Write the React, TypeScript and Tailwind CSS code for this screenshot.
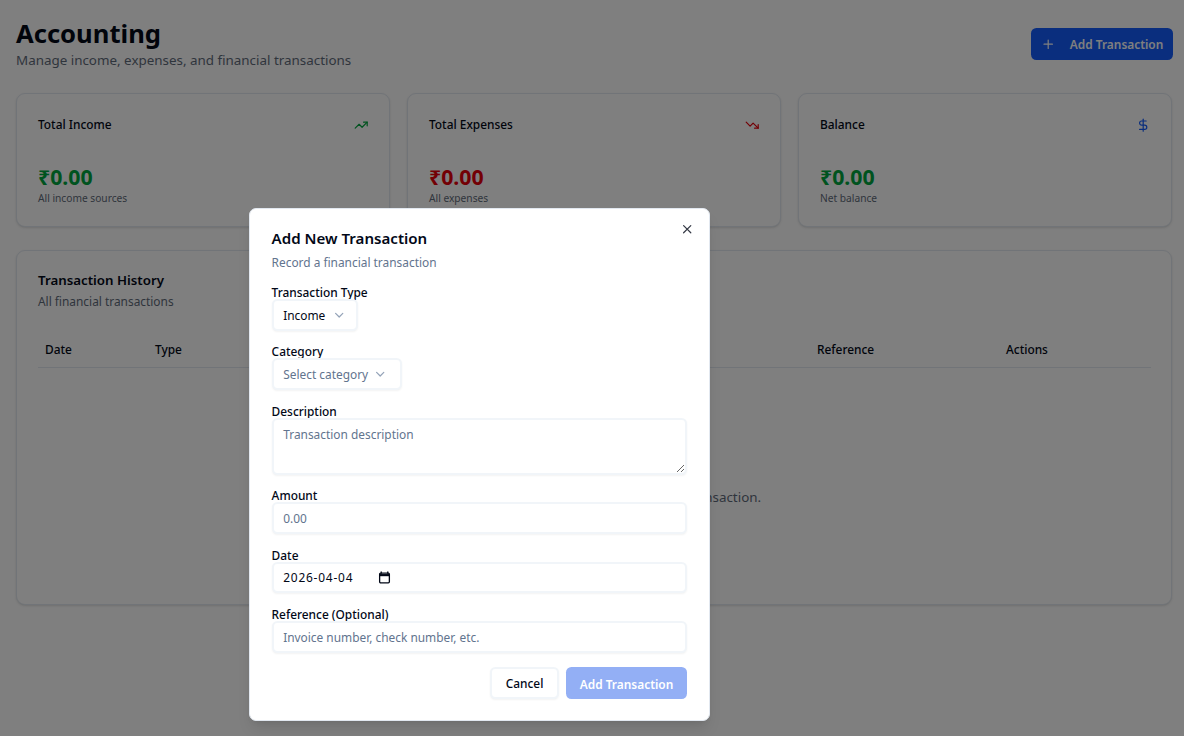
import { ChevronDown, DollarSign, Plus, TrendingDown, TrendingUp, X } from "lucide-react";

const stats = [
  { title: "Total Income", value: "₹0.00", note: "All income sources", color: "text-[#00a63e]", icon: <TrendingUp className="w-[14.4px] h-[14.4px] text-[#00a63e]" /> },
  { title: "Total Expenses", value: "₹0.00", note: "All expenses", color: "text-[#e7000b]", icon: <TrendingDown className="w-[14.4px] h-[14.4px] text-[#e7000b]" /> },
  { title: "Balance", value: "₹0.00", note: "Net balance", color: "text-[#00a63e]", icon: <DollarSign className="w-[14.4px] h-[14.4px] text-[#155dfc]" /> },
];

const columns = [
  { name: "Date", width: "w-[110px]" },
  { name: "Type", width: "w-[150px]" },
  { name: "Category", width: "w-[160px]" },
  { name: "Description", width: "w-[180px]" },
  { name: "Amount", width: "w-[172px]" },
  { name: "Reference", width: "w-[189px]" },
  { name: "Actions", width: "flex-1" },
];

const inputClass =
  "w-full h-[32.4px] rounded-[5.4px] border-2 border-[#f1f5f9] bg-white px-[9.6px] text-[11.9px] shadow-xs outline-none flex items-center placeholder:text-[#62748e]";

function Field({ label, children }: { label: string; children: React.ReactNode }) {
  return (
    <div className="mt-[13.8px] flex flex-col">
      <div className="text-[11.9px] font-medium leading-[13px] text-[#020817]">{label}</div>
      {children}
    </div>
  );
}

export default function App() {
  return (
    <div className="relative h-[736px] overflow-hidden bg-white font-['Noto_Sans',sans-serif] text-[#020817]">
      <div className="pl-[16px] pr-[12px] pt-[18px]">
        <div className="flex items-start justify-between">
          <div>
            <h1 className="text-[25.6px] leading-[32px] font-bold">Accounting</h1>
            <p className="text-[13.4px] leading-[20px] text-[#5f6b7a]">Manage income, expenses, and financial transactions</p>
          </div>
          <button className="mr-[-1px] mt-[10px] flex h-[32.4px] w-[142px] items-center rounded-[5.4px] bg-[#155dfc] pl-[10px] text-[11.9px] font-semibold text-white">
            <Plus className="mr-[14.4px] h-[14.4px] w-[14.4px]" />
            <span className="pt-[1px]">Add Transaction</span>
          </button>
        </div>

        <div className="mt-[23px] grid grid-cols-3 gap-[17px]">
          {stats.map((s) => (
            <div key={s.title} className="h-[134px] rounded-[9px] border border-[#e2e8f0] bg-white pl-[21px] pr-[20.4px] pt-[22px] shadow-sm">
              <div className="flex h-[18px] items-center justify-between">
                <span className="text-[11.9px] font-medium">{s.title}</span>
                {s.icon}
              </div>
              <div className={`mt-[29px] text-[21.3px] leading-[28.8px] font-bold ${s.color}`}>{s.value}</div>
              <div className="mt-[-1px] text-[10.2px] leading-[14.4px] text-[#5f6b7a]">{s.note}</div>
            </div>
          ))}
        </div>

        <div className="mt-[23px] h-[355px] rounded-[9px] border border-[#e2e8f0] bg-white pl-[21px] pr-[19.6px] pt-[20px] shadow-sm">
          <h2 className="text-[13.3px] leading-[18px] font-semibold">Transaction History</h2>
          <p className="mt-[3px] text-[11.9px] leading-[18px] text-[#5f6b7a]">All financial transactions</p>
          <div className="mt-[22px] flex h-[36px] items-center border-b border-[#e2e8f0] px-[7px] text-[11.9px] font-medium">
            {columns.map((c) => (
              <div key={c.name} className={c.width}>{c.name}</div>
            ))}
          </div>
          <p className="mt-[119px] pl-[6px] text-center text-[13.4px] text-[#5f6b7a]">No transactions found. Create your first transaction.</p>
        </div>
      </div>

      <div className="absolute inset-0 bg-black/50" />

      <div className="absolute left-[249px] top-[208px] h-[513px] w-[461px] rounded-[7px] border border-[#e2e8f0] bg-white pl-[21.6px] pr-[22px] pt-[20.6px] shadow-lg">
        <X className="absolute right-[15px] top-[13px] h-[14.4px] w-[14.4px] text-[#020817] opacity-80" />
        <h2 className="text-[15.1px] leading-[16.2px] font-semibold">Add New Transaction</h2>
        <p className="mt-[7px] pb-[1px] text-[11.9px] leading-[18px] text-[#62748e]">Record a financial transaction</p>

        <Field label="Transaction Type">
          <div className={`${inputClass} !w-[86px] justify-between`}>
            <span className="pt-[2px]">Income</span>
            <ChevronDown className="h-[14.4px] w-[14.4px] text-[#94a3b8]" />
          </div>
        </Field>
        <Field label="Category">
          <div className={`${inputClass} !w-[130px] !pr-[12px] justify-between text-[#62748e]`}>
            <span className="pt-[2px]">Select category</span>
            <ChevronDown className="h-[14.4px] w-[14.4px] text-[#94a3b8]" />
          </div>
        </Field>
        <div className="pt-[1px]">
          <Field label="Description">
            <textarea className={`${inputClass} !h-[57px] !items-start resize-y pt-[6px]`} placeholder="Transaction description" />
          </Field>
        </div>
        <Field label="Amount">
          <input className={inputClass} placeholder="0.00" />
        </Field>
        <div className="pt-[0.6px]">
          <Field label="Date">
            <div className={`${inputClass} !h-[31.8px]`}>
              <span className="tracking-[0.8px]">2026-04-04</span>
              {/* native date input is locale bound, so the value and its glyph are drawn here */}
              <svg viewBox="0 0 12 12" className="ml-[25px] h-[13px] w-[13px]" fill="none" stroke="#020817">
                <path d="M3 .5v2M9 .5v2" strokeWidth="1.2" />
                <rect x="1.5" y="2" width="9" height="9" rx="1" strokeWidth="1.2" />
                <path d="M1.5 3.8h9" strokeWidth="2" />
              </svg>
            </div>
          </Field>
        </div>
        <div className="pt-[0.6px]">
          <Field label="Reference (Optional)">
            <input className={`${inputClass} !h-[31.8px] pt-[1px]`} placeholder="Invoice number, check number, etc." />
          </Field>
        </div>

        <div className="mt-[14.4px] flex justify-end gap-[7px]">
          <button className="h-[32.4px] w-[69px] rounded-[5.4px] border-2 border-[#f1f5f9] bg-white pt-[2px] text-[11.9px] font-medium shadow-xs">Cancel</button>
          <button className="h-[32.4px] w-[121px] rounded-[5.4px] bg-[#93aff5] pt-[3px] text-[11.9px] font-semibold text-white">Add Transaction</button>
        </div>
      </div>
    </div>
  );
}
